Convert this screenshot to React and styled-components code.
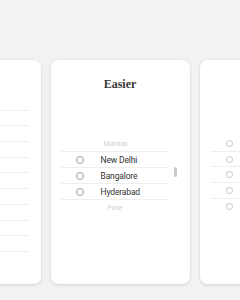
import React from 'react';
import styled, { createGlobalStyle } from 'styled-components';

const GlobalStyle = createGlobalStyle`
    html, body {
        margin: 0;
        padding: 0;
        background: #f2f2f2;
        font-family: Roboto, "Liberation Sans", sans-serif;
    }
`;

const Stage = styled.div`
    width: 240px;
    height: 300px;
    overflow: hidden;
    display: flex;
    justify-content: center;
    gap: 10px;
    padding-top: 60px;
    box-sizing: border-box;
`;

const Card = styled.div`
    flex: 0 0 139px;
    height: 224px;
    background: #fff;
    border-radius: 7px;
    box-shadow: 0 1px 3px rgba(0, 0, 0, 0.13), 0 0 1px rgba(0, 0, 0, 0.08);
    padding-top: 16px;
    box-sizing: border-box;
`;

const Title = styled.h2`
    margin: 0;
    height: 16px;
    line-height: 16px;
    text-align: center;
    font-family: "Liberation Serif", serif;
    font-weight: bold;
    font-size: 12px;
    color: #3a3a3a;
`;

const Wheel = styled.div`
    position: relative;
    margin-top: ${(props) => props.top}px;
    margin-left: ${(props) => props.left}px;
    width: ${(props) => props.width}px;
`;

const Row = styled.div`
    display: flex;
    align-items: center;
    height: ${(props) => props.h}px;
    box-sizing: border-box;
    border-bottom: 1px solid #efefef;
    &:last-child {
        border-bottom: none;
    }
`;

const Radio = styled.span`
    flex: 0 0 auto;
    width: ${(props) => props.size}px;
    height: ${(props) => props.size}px;
    box-sizing: border-box;
    border: 1px solid ${(props) => props.tone};
    border-radius: 50%;
    margin-left: ${(props) => props.offset}px;
    margin-right: 17px;
`;

const Label = styled.span`
    font-size: ${(props) => (props.faded ? 6.5 : 8.5)}px;
    letter-spacing: ${(props) => (props.faded ? 0 : -0.15)}px;
    color: ${(props) => (props.faded ? '#cfcfcf' : '#333')};
    padding-left: ${(props) => props.indent || 0}px;
    white-space: nowrap;
`;

const ScrollThumb = styled.div`
    position: absolute;
    left: 113px;
    top: 31px;
    width: 3px;
    height: 10px;
    border-radius: 2px;
    background: #c9c9c9;
`;

const cities = [
    { name: 'Mumbai', faded: true, indent: 43 },
    { name: 'New Delhi' },
    { name: 'Bangalore' },
    { name: 'Hyderabad' },
    { name: 'Pune', faded: true, indent: 47 },
];

const App = () => {
    return (
        <>
            <GlobalStyle />
            <Stage>
                <Card>
                    <Wheel top={19} left={10} width={117}>
                        {Array.from({ length: 11 }).map((_, i) => (
                            <Row key={i} h={15.7} />
                        ))}
                    </Wheel>
                </Card>

                <Card>
                    <Title>Easier</Title>
                    <Wheel top={44} left={10} width={107}>
                        <ScrollThumb />
                        {cities.map((c) => (
                            <Row key={c.name} h={16}>
                                {!c.faded && <Radio size={8} tone="#a0a0a0" offset={15} />}
                                <Label faded={c.faded} indent={c.indent}>{c.name}</Label>
                            </Row>
                        ))}
                    </Wheel>
                </Card>

                <Card>
                    <Wheel top={60} left={11} width={117}>
                        {Array.from({ length: 5 }).map((_, i) => (
                            <Row key={i} h={15.7}>
                                <Radio size={7} tone="#c4c4c4" offset={15} />
                            </Row>
                        ))}
                    </Wheel>
                </Card>
            </Stage>
        </>
    );
};

export default App;
